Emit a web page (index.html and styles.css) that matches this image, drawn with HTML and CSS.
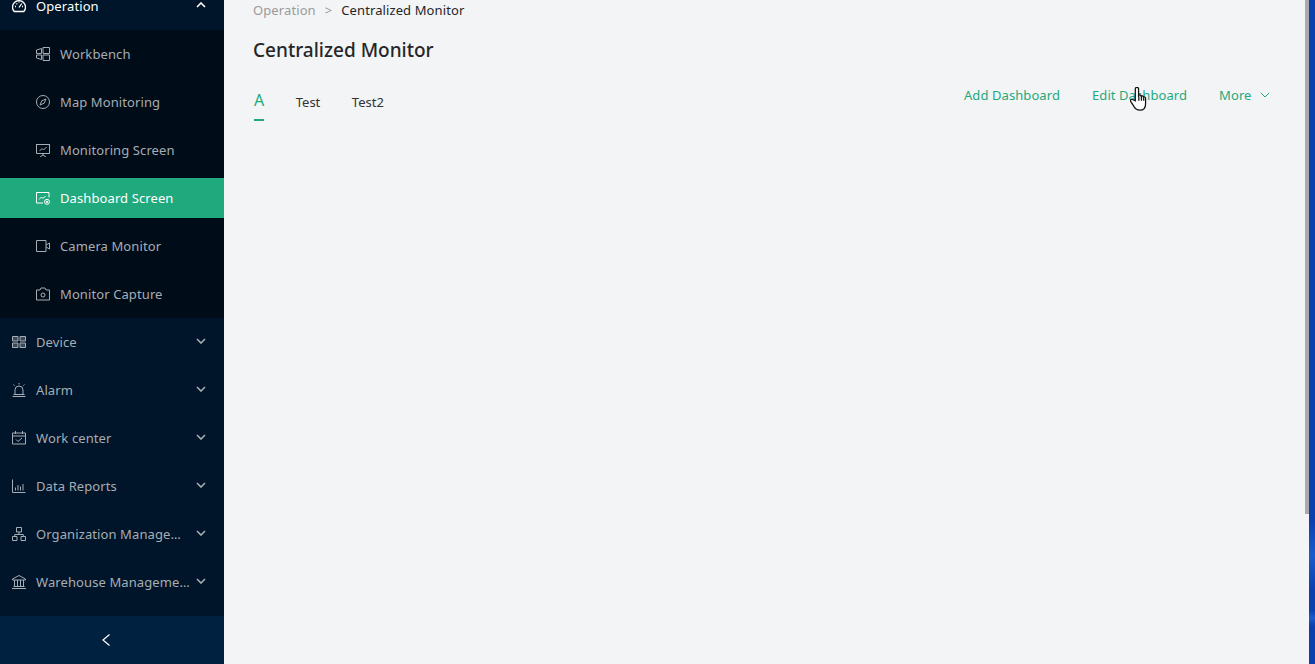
FILE: index.html
```html
<!DOCTYPE html>
<html lang="en">

<head>
    <meta charset="UTF-8">
    <meta name="viewport" content="width=device-width, initial-scale=1.0">
    <title>Centralized Monitor</title>
    <link rel="stylesheet" href="styles.css">
</head>

<body>
    <aside class="sidebar">
        <nav class="menu">
            <div class="menu-item open">
                <svg class="icon" viewBox="1 1 14 14"><path d="M3.200 13.500h9.600a6.500 6.500 0 1 0-9.600 0z"/><path d="M8 9.500 10.800 5.500M4 8.500h1M11 8.500h1M5.500 5.500l.7.7M8 3.500v1"/></svg>
                <span class="label">Operation</span>
                <svg class="arrow up" viewBox="0 0 10 6"><path d="M1 5l4-4 4 4"/></svg>
            </div>
            <div class="submenu">
                <div class="sub-item">
                    <svg class="icon" viewBox="1 1 14 14"><path d="M1.500 4l5-1.500v5h-5zM1.500 9h5v4.500l-5-1.500zM8 1.500h6.500v6H8zM8 9h6.500v5.500H8z"/></svg>
                    <span>Workbench</span>
                </div>
                <div class="sub-item">
                    <svg class="icon" viewBox="1 1 14 14"><circle cx="8" cy="8" r="6.500"/><path d="M11 5 9.200 9.200 5 11l1.800-4.200z"/></svg>
                    <span>Map Monitoring</span>
                </div>
                <div class="sub-item">
                    <svg class="icon" viewBox="1 1 14 14"><path d="M1 2.500h14M1.500 2.500v9h13v-9M8 11.500v1.500M5 15l3-2 3 2M4.500 9 7 6.500l1.500 1.500 3-3"/></svg>
                    <span>Monitoring Screen</span>
                </div>
                <div class="sub-item active">
                    <svg class="icon" viewBox="1 1 14 14"><path d="M8 13H1.500V2.500h12.500v5M4 9.500l2.500-2.500L8 8.500l2.500-2.500"/><circle cx="12" cy="11.800" r="2.500"/><circle class="dot" cx="12" cy="11.800" r=".8"/></svg>
                    <span>Dashboard Screen</span>
                </div>
                <div class="sub-item">
                    <svg class="icon" viewBox="1 1 14 14"><path d="M1.500 2.500h9.500v11H1.500zM11 7l3.500-2v6L11 9"/></svg>
                    <span>Camera Monitor</span>
                </div>
                <div class="sub-item">
                    <svg class="icon" viewBox="1 1 14 14"><path d="M1.500 4H5l1-2h4l1 2h3.500v10h-13z"/><circle cx="8" cy="9" r="2"/></svg>
                    <span>Monitor Capture</span>
                </div>
            </div>
            <div class="menu-item">
                <svg class="icon" viewBox="1 1 14 14"><path class="soft" d="M1.500 2.500h5.500v4.500H1.500zM9 2.500h5.500v4.500H9zM1.500 9h5.500v4.500H1.500zM9 9h5.500v4.500H9z"/></svg>
                <span class="label">Device</span>
                <svg class="arrow" viewBox="0 0 10 6"><path d="M1 1l4 4 4-4"/></svg>
            </div>
            <div class="menu-item">
                <svg class="icon" viewBox="1 1 14 14"><path d="M4 12.500V8a4 4 0 0 1 8 0v4.500M1.500 14.500h13M2.500 12.500h11M8 1v1.500M2.500 2.500l1.200 1.200M13.500 2.500l-1.200 1.200"/></svg>
                <span class="label">Alarm</span>
                <svg class="arrow" viewBox="0 0 10 6"><path d="M1 1l4 4 4-4"/></svg>
            </div>
            <div class="menu-item">
                <svg class="icon" viewBox="1 1 14 14"><path d="M1.500 3h13v11h-13zM1.500 6h13M4.500 1V4M11.500 1V4M5 9.500l2 2 4-3.500"/></svg>
                <span class="label">Work center</span>
                <svg class="arrow" viewBox="0 0 10 6"><path d="M1 1l4 4 4-4"/></svg>
            </div>
            <div class="menu-item">
                <svg class="icon" viewBox="1 1 14 14"><path d="M1.500 1.500v13h13M4.500 12.500V9.500M7 12.500V7M9.500 12.500V8.500M12 12.500V6"/></svg>
                <span class="label">Data Reports</span>
                <svg class="arrow" viewBox="0 0 10 6"><path d="M1 1l4 4 4-4"/></svg>
            </div>
            <div class="menu-item">
                <svg class="icon" viewBox="1 1 14 14"><path d="M5.500 1.500h5v4.500h-5zM1.500 10.500h4.500v4H1.500zM10 10.500h4.500v4H10zM8 6v2.500M3.750 10.500V8.500h8.500v2"/></svg>
                <span class="label clip">Organization Management</span>
                <svg class="arrow" viewBox="0 0 10 6"><path d="M1 1l4 4 4-4"/></svg>
            </div>
            <div class="menu-item">
                <svg class="icon" viewBox="1 1 14 14"><path d="M8 1.500 1.500 5v1h13V5zM3.500 6v6.500M6.500 6v6.500M9.500 6v6.500M12.500 6v6.500M2.500 12.500h11M1 14.500h14"/></svg>
                <span class="label clip">Warehouse Management</span>
                <svg class="arrow" viewBox="0 0 10 6"><path d="M1 1l4 4 4-4"/></svg>
            </div>
        </nav>
        <div class="collapse-bar">
            <svg class="collapse-icon" viewBox="0 0 10 14"><path d="M8.500 1.500 2 7l6.500 5.500"/></svg>
        </div>
    </aside>

    <main class="content">
        <div class="breadcrumb">
            <span class="crumb-link">Operation</span>
            <span class="crumb-sep">&gt;</span>
            <span>Centralized Monitor</span>
        </div>
        <h1 class="page-title">Centralized Monitor</h1>
        <div class="toolbar">
            <div class="tabs">
                <div class="tab active">A</div>
                <div class="tab">Test</div>
                <div class="tab">Test2</div>
            </div>
            <div class="actions">
                <a class="action">Add Dashboard</a>
                <a class="action">Edit Dashboard</a>
                <a class="action">More
                    <svg class="more-arrow" viewBox="0 0 10 6"><path d="M.8.800 5 5 9.200.8"/></svg>
                </a>
            </div>
        </div>
    </main>

    <div class="scroll-thumb"></div>
    <div class="desktop-strip"></div>

    <svg class="cursor" viewBox="1 1 13.500 20">
        <path d="M5.200 12V2.600a1.300 1.300 0 0 1 2.600 0V9l.3-1.500c.9-.4 1.700 0 1.800.8.800-.6 1.700-.2 1.800.7.800-.4 1.600 0 1.700 1v4.500c0 3-1.800 5-4.600 5-2.400 0-3.600-1-4.600-2.800L1.500 12.500c-.6-1.200.9-2.400 2-1.300z"/>
        <path d="M8 9v3M10.100 8.400V12M11.900 9.100V12"/>
    </svg>
</body>

</html>
```
FILE: styles.css
```css
* {
    box-sizing: border-box;
}

html,
body {
    height: 100%;
    margin: 0;
    overflow: hidden;
}

body {
    display: flex;
    background-color: #f3f4f6;
    font-family: "Noto Sans", Arial, sans-serif;
    font-size: 13px;
    color: #262626;
}

/* sidebar */
.sidebar {
    width: 224px;
    height: 664px;
    flex-shrink: 0;
    display: flex;
    flex-direction: column;
    justify-content: space-between;
    background-color: #001529;
    overflow: hidden;
    letter-spacing: 0.1px;
}

.menu {
    margin-top: -18px;
}

.menu-item,
.sub-item {
    display: flex;
    align-items: center;
    color: #a6adb4;
}

.menu-item {
    height: 48px;
    padding: 0 18px 0 12px;
}

.menu-item.open {
    color: #fff;
}

.submenu {
    display: flex;
    flex-direction: column;
    gap: 8px;
    padding: 4px 0;
    background-color: #000c17;
}

.sub-item {
    height: 40px;
    padding-left: 36px;
}

.sub-item.active {
    background-color: #1fa97c;
    color: #fff;
}

.icon {
    width: 14px;
    height: 14px;
    flex-shrink: 0;
    margin-right: 10px;
    fill: none;
    stroke: currentColor;
    stroke-width: 1;
}

.icon .dot {
    fill: currentColor;
}

.icon .soft {
    fill: currentColor;
    fill-opacity: 0.35;
}

.open .icon {
    stroke-width: 1.3;
}

.label {
    flex: 1;
    white-space: nowrap;
}

.clip {
    overflow: hidden;
    text-overflow: ellipsis;
}

.arrow {
    width: 10px;
    height: 6px;
    flex-shrink: 0;
    margin-left: 6px;
    margin-top: -2px;
    fill: none;
    stroke: currentColor;
    stroke-width: 1.6;
}

.arrow.up {
    margin-top: -3px;
}

.collapse-bar {
    height: 48px;
    display: flex;
    align-items: center;
    justify-content: center;
    background-color: #002140;
    padding-right: 12px;
}

.collapse-icon {
    width: 10px;
    height: 14px;
    fill: none;
    stroke: #fff;
    stroke-width: 1.2;
}

/* main area */
.content {
    flex: 1;
    padding: 0 45px 0 29px;
}

.breadcrumb {
    height: 19px;
    display: flex;
    align-items: center;
    letter-spacing: 0.1px;
}

.crumb-link {
    color: #9b9b9b;
}

.crumb-sep {
    margin: 0 9px;
    color: #9b9b9b;
}

.page-title {
    margin: 19px 0 0;
    font-size: 19px;
    line-height: 24px;
    font-weight: 500;
    color: #262626;
}

.toolbar {
    display: flex;
    justify-content: space-between;
    align-items: flex-start;
    margin-top: 20px;
}

.tabs {
    display: flex;
    gap: 31.5px;
    margin-left: 1px;
}

.tab {
    height: 39px;
    padding-top: 11px;
    line-height: 18px;
    color: #333;
}

.tab.active {
    padding-top: 7px;
    font-size: 16px;
    line-height: 22px;
    color: #1fa97c;
    border-bottom: 2px solid #1fa97c;
}

.actions {
    display: flex;
    gap: 32px;
    margin-top: 4px;
    letter-spacing: 0.08px;
}

.action {
    display: flex;
    align-items: center;
    line-height: 18px;
    color: #1fa97c;
}

.more-arrow {
    width: 10px;
    height: 6px;
    margin-left: 8.5px;
    fill: none;
    stroke: currentColor;
    stroke-width: 1;
}

/* window edge + cursor, these sit over the page */
.scroll-thumb {
    position: absolute;
    left: 1305px;
    top: 0;
    width: 4px;
    height: 514px;
    background-color: #a9a9a9;
}

.desktop-strip {
    position: absolute;
    left: 1309px;
    top: 0;
    width: 6px;
    height: 664px;
    background: linear-gradient(#0a3fb0 0, #0a3fb0 520px, #1a5cd0 555px, #0a3fb0 590px, #0a3fb0 610px, #1a5cd0 618px, #0a3fb0 626px);
}

.cursor {
    position: absolute;
    left: 1130px;
    top: 87px;
    width: 17px;
    height: 25px;
    fill: #fff;
    stroke: #111;
    stroke-width: 1;
}
```
